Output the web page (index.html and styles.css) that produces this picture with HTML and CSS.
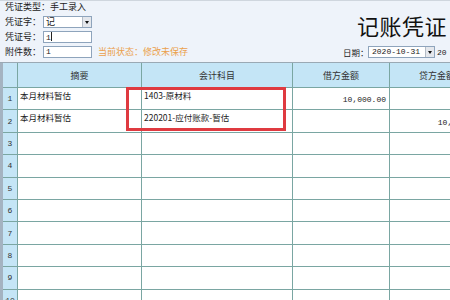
FILE: index.html
```html
<!DOCTYPE html>
<html lang="zh-CN">
<head>
  <meta charset="UTF-8" />
  <title>记账凭证</title>
  <link rel="stylesheet" href="styles.css">
</head>
<body>
  <main class="voucher">
    <!-- voucher header: type, number, attachments, title, date -->
    <header class="head">
      <div class="form">
        <div class="kind">凭证类型：手工录入</div>
        <div class="field">
          <label>凭证字：</label>
          <div class="combo"><span class="val">记</span><i class="drop"></i></div>
        </div>
        <div class="field">
          <label>凭证号：</label>
          <div class="box">1<span class="caret"></span></div>
        </div>
        <div class="field">
          <label>附件数：</label>
          <div class="box">1</div>
          <span class="status">当前状态：修改未保存</span>
        </div>
      </div>
      <div class="title-block">
        <h1 class="title">记账凭证</h1>
        <div class="date">
          <label>日期：</label>
          <div class="combo date-combo"><span class="val">2020-10-31</span><i class="drop"></i></div>
          <span class="more">20</span>
        </div>
      </div>
    </header>

    <!-- entry lines -->
    <section class="lines">
      <div class="grid">
        <div class="cell hd num"></div>
        <div class="cell hd">摘要</div>
        <div class="cell hd">会计科目</div>
        <div class="cell hd">借方金额</div>
        <div class="cell hd">贷方金额</div>

        <div class="cell num">1</div>
        <div class="cell txt">本月材料暂估</div>
        <div class="cell txt">1403-原材料</div>
        <div class="cell amt">10,000.00</div>
        <div class="cell amt"></div>

        <div class="cell num">2</div>
        <div class="cell txt">本月材料暂估</div>
        <div class="cell txt">220201-应付账款-暂估</div>
        <div class="cell amt"></div>
        <div class="cell amt">10,000.00</div>

        <div class="cell num">3</div><div class="cell"></div><div class="cell"></div><div class="cell"></div><div class="cell"></div>
        <div class="cell num">4</div><div class="cell"></div><div class="cell"></div><div class="cell"></div><div class="cell"></div>
        <div class="cell num">5</div><div class="cell"></div><div class="cell"></div><div class="cell"></div><div class="cell"></div>
        <div class="cell num">6</div><div class="cell"></div><div class="cell"></div><div class="cell"></div><div class="cell"></div>
        <div class="cell num">7</div><div class="cell"></div><div class="cell"></div><div class="cell"></div><div class="cell"></div>
        <div class="cell num">8</div><div class="cell"></div><div class="cell"></div><div class="cell"></div><div class="cell"></div>
        <div class="cell num">9</div><div class="cell"></div><div class="cell"></div><div class="cell"></div><div class="cell"></div>
        <div class="cell num">10</div><div class="cell"></div><div class="cell"></div><div class="cell"></div><div class="cell"></div>
      </div>
      <!-- red annotation box drawn over the account column -->
      <div class="highlight"></div>
    </section>
  </main>
</body>
</html>
```

FILE: styles.css
```css
:root {
  --top-bg: #eef3fa;
  --head-bg: #c4e5f6;
  --grid-line: #7aa6a2;
  --input-border: #8ea4bc;
  --status: #eba04b;
  --mark: #df3a40;
  --ui-font: "Noto Sans CJK SC", "DejaVu Sans", sans-serif;
  --num-font: "Liberation Mono", "DejaVu Sans Mono", monospace;
}

* {
  box-sizing: border-box;
  margin: 0;
  padding: 0;
}

body {
  width: 450px;
  height: 300px;
  overflow: hidden;
  background: #fff;
  color: #222;
  font-family: var(--ui-font);
  font-size: 9px;
}

.voucher {
  width: 450px;
}

/* ---------- header ---------- */
.head {
  display: flex;
  height: 63px;
  background: var(--top-bg);
  border-top: 1px solid #cfd6de;
  border-bottom: 1px solid #9aa9b4;
  overflow: hidden;
}

.form {
  flex: 0 0 343px;
  padding-left: 5px;
}

.kind {
  height: 13px;
  line-height: 12px;
}

.field {
  display: flex;
  align-items: center;
  height: 15px;
}

.field label {
  width: 38px;
  line-height: 12px;
}

.box,
.combo {
  position: relative;
  width: 49px;
  height: 12px;
  background: #fff;
  border: 1px solid var(--input-border);
  line-height: 10px;
  padding-left: 2px;
  font-family: var(--num-font);
  font-size: 8px;
}

.combo .val {
  font-family: var(--ui-font);
  font-size: 9px;
}

.caret {
  display: inline-block;
  width: 1px;
  height: 9px;
  background: #222;
  vertical-align: -1px;
}

/* drop-down button with a small triangle */
.drop {
  position: absolute;
  right: 0;
  top: 0;
  width: 9px;
  height: 10px;
  background: #e4e7ec;
  border-left: 1px solid #b4bcc6;
}

.drop::after {
  content: "";
  position: absolute;
  left: 2px;
  top: 4px;
  border-left: 2.5px solid transparent;
  border-right: 2.5px solid transparent;
  border-top: 3px solid #111;
}

.status {
  margin-left: 6px;
  color: var(--status);
  line-height: 12px;
}

.title-block {
  flex: none;
  white-space: nowrap;
}

.title {
  margin: 12px 0 0 14px;
  font-size: 22px;
  font-weight: 400;
  line-height: 24px;
  letter-spacing: 0.5px;
  color: #111;
}

.date {
  display: flex;
  align-items: center;
  margin-top: 9px;
  height: 12px;
}

.date label {
  width: 25px;
  font-size: 8.5px;
}

.date-combo {
  width: 67px;
  padding-left: 3px;
}

.date-combo .val {
  font-family: var(--num-font);
  font-size: 8px;
}

.more {
  margin-left: 2px;
  font-family: var(--num-font);
  font-size: 8px;
}

/* ---------- lines grid ---------- */
.lines {
  position: relative;
}

.grid {
  display: grid;
  grid-template-columns: 15px 124px 151px 97px 95px;
  grid-template-rows: 25px;
  grid-auto-rows: 22.4px;
  border-left: 3px solid #a4b3c1;
}

.cell {
  border-right: 1px solid var(--grid-line);
  border-bottom: 1px solid var(--grid-line);
  overflow: hidden;
  white-space: nowrap;
}

.hd {
  display: flex;
  align-items: center;
  justify-content: center;
  background: var(--head-bg);
  font-size: 9px;
  color: #333;
}

.num {
  display: flex;
  align-items: center;
  justify-content: center;
  background: var(--head-bg);
  font-family: var(--num-font);
  font-size: 8px;
  color: #333;
}

.txt {
  padding: 2px 0 0 2px;
  font-size: 8.5px;
  line-height: 10px;
}

.amt {
  display: flex;
  align-items: center;
  justify-content: flex-end;
  padding: 2px 3px 0 0;
  font-family: var(--num-font);
  font-size: 8px;
}

.highlight {
  position: absolute;
  left: 126px;
  top: 24px;
  width: 160px;
  height: 44px;
  border: 3px solid var(--mark);
}
```
